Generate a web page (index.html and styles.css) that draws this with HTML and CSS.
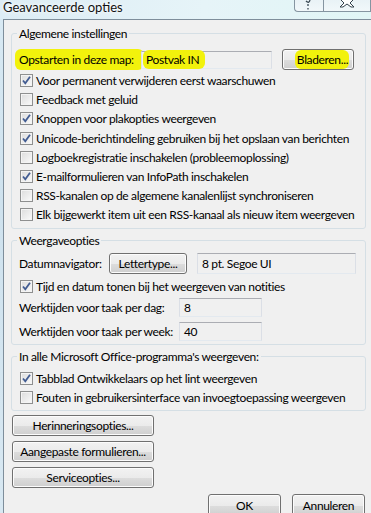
FILE: index.html
```html
<!DOCTYPE html>
<html lang="nl">
<head>
    <meta charset="UTF-8">
    <title>Geavanceerde opties</title>
    <link rel="stylesheet" href="styles.css">
</head>
<body>
    <div class="window">
        <div class="titlebar">
            <span class="title">Geavanceerde opties</span>
            <div class="caption-buttons">
                <span class="cap-btn help">
                    <svg width="10" height="10" viewBox="0 0 10 10"><path d="M2 1 Q5 4 6 0 M4 4 L4 6 M4 8 L4 9.5" fill="none" stroke="#3b4a55" stroke-width="1.3"/></svg>
                </span>
                <span class="cap-btn close">
                    <svg width="16" height="8" viewBox="0 0 16 8"><path d="M2 0 L5 3 L1 7 L4 7 L8 4 L12 7 L15 7 L11 3 L14 0" fill="#fff" stroke="#34424d" stroke-width="1"/></svg>
                </span>
            </div>
        </div>

        <div class="client">
            <fieldset class="group group-general">
                <legend>Algemene instellingen</legend>
                <div class="row map-row">
                    <span class="map-label"><span class="hl hl-label">Opstarten in deze map:</span></span>
                    <span class="field readonly map-field"><span class="hl hl-field">Postvak IN</span></span>
                    <span class="btn browse-btn"><span class="hl hl-btn">Bladeren...</span></span>
                </div>
                <div class="check-row checked"><span class="box"></span>Voor permanent verwijderen eerst waarschuwen</div>
                <div class="check-row"><span class="box"></span>Feedback met geluid</div>
                <div class="check-row checked"><span class="box"></span>Knoppen voor plakopties weergeven</div>
                <div class="check-row checked"><span class="box"></span>Unicode-berichtindeling gebruiken bij het opslaan van berichten</div>
                <div class="check-row"><span class="box"></span>Logboekregistratie inschakelen (probleemoplossing)</div>
                <div class="check-row checked"><span class="box"></span>E-mailformulieren van InfoPath inschakelen</div>
                <div class="check-row"><span class="box"></span>RSS-kanalen op de algemene kanalenlijst synchroniseren</div>
                <div class="check-row"><span class="box"></span>Elk bijgewerkt item uit een RSS-kanaal als nieuw item weergeven</div>
            </fieldset>

            <fieldset class="group group-display">
                <legend>Weergaveopties</legend>
                <div class="row date-row">
                    <span class="date-label">Datumnavigator:</span>
                    <span class="btn font-btn">Lettertype...</span>
                    <span class="field readonly font-field">8 pt. Segoe UI</span>
                </div>
                <div class="check-row checked notes-row"><span class="box"></span>Tijd en datum tonen bij het weergeven van notities</div>
                <div class="row hours-row">
                    <span class="hours-label">Werktijden voor taak per dag:</span>
                    <span class="field hours-field">8</span>
                </div>
                <div class="row hours-row week-row">
                    <span class="hours-label">Werktijden voor taak per week:</span>
                    <span class="field hours-field">40</span>
                </div>
            </fieldset>

            <fieldset class="group group-office">
                <legend>In alle Microsoft Office-programma's weergeven:</legend>
                <div class="check-row checked"><span class="box"></span>Tabblad Ontwikkelaars op het lint weergeven</div>
                <div class="check-row"><span class="box"></span>Fouten in gebruikersinterface van invoegtoepassing weergeven</div>
            </fieldset>

            <div class="side-buttons">
                <span class="btn side-btn">Herinneringsopties...</span>
                <span class="btn side-btn">Aangepaste formulieren...</span>
                <span class="btn side-btn">Serviceopties...</span>
            </div>

            <div class="dialog-buttons">
                <span class="btn dlg-btn">OK</span>
                <span class="btn dlg-btn">Annuleren</span>
            </div>
        </div>
    </div>
</body>
</html>
```

FILE: styles.css
```css
/* Windows 7 dialoog */
* { margin: 0; padding: 0; box-sizing: border-box; }
html, body { width: 371px; height: 513px; overflow: hidden; }
body {
    font-family: Lato, "Liberation Sans", sans-serif;
    font-size: 12px;
    letter-spacing: -0.35px;
    color: #000;
    background: #d6e7f1;
}
.window {
    width: 371px;
    height: 513px;
    background: linear-gradient(180deg, #d9eaf4 0%, #cfe2ee 40%, #d8e8f2 100%);
}

/* titelbalk */
.titlebar {
    height: 19px;
    display: flex;
    justify-content: space-between;
    background: linear-gradient(90deg, #dcecf5 0%, #e6f4f8 55%, #e1f6f6 100%);
}
.title {
    padding-left: 3px;
    line-height: 14px;
    font-size: 13px;
    letter-spacing: 0;
    color: #111;
    white-space: nowrap;
    text-shadow: 0 0 6px #fff, 0 0 3px #fff;
}
.caption-buttons { display: flex; height: 12px; }
.cap-btn {
    display: flex;
    justify-content: center;
    align-items: flex-start;
    height: 12px;
    border: 1px solid #8595a1;
    border-top: none;
    background: linear-gradient(180deg, #e9f2f6, #f1f8fa);
}
.cap-btn.help { width: 29px; border-radius: 0 0 0 4px; border-right: none; }
.cap-btn.close { width: 48px; }

/* clientgebied */
.client {
    margin-left: 3px;
    height: 494px;
    border-left: 1px solid #7e8e9b;
    border-top: 1px solid #7e8e9b;
    background: #f0f0f0;
    padding-left: 7px;
    padding-top: 6px;
}

.group {
    width: 355px;
    border: 1px solid #d5dfe5;
    border-radius: 3px;
    padding: 0 8px 3px 8px;
}
.group legend {
    margin-left: -3px;
    padding: 0 2px;
    line-height: 15px;
    white-space: nowrap;
}
.group-general { padding-top: 8px; padding-bottom: 3px; }
.group-display { margin-top: 4px; padding-top: 5px; padding-bottom: 3px; }
.group-office { margin-top: 4px; padding-top: 5px; padding-bottom: 3px; }

.row { display: flex; align-items: center; white-space: nowrap; }
.map-row { height: 21px; margin-bottom: 1px; }
.map-label { width: 122px; flex: none; margin-left: -1px; }
.map-field { width: 131px; height: 18px; flex: none; }
.browse-btn { width: 72px; height: 21px; flex: none; margin-left: 10px; }

.check-row {
    display: flex;
    align-items: center;
    height: 19.2px;
    white-space: nowrap;
}
.box {
    width: 13px;
    height: 13px;
    margin-right: 3px;
    flex: none;
    border: 1px solid #8e8f8f;
    background: linear-gradient(135deg, #dcdcdc 0%, #eeeeee 60%, #fbfbfb 100%);
    box-shadow: inset 0 0 0 1px #f4f4f4;
}
.checked .box {
    background-image:
        url("data:image/svg+xml,%3Csvg xmlns='http://www.w3.org/2000/svg' width='11' height='11' viewBox='0 0 11 11'%3E%3Cpath d='M2 5.5 L4.3 8.3 L9 1.8' fill='none' stroke='%23425c92' stroke-width='1.8'/%3E%3C/svg%3E"),
        linear-gradient(135deg, #dcdcdc 0%, #eeeeee 60%, #fbfbfb 100%);
}

.date-row { height: 21px; }
.date-label { width: 90px; flex: none; margin-left: -1px; }
.font-btn { width: 78px; height: 21px; flex: none; }
.font-field { width: 159px; height: 21px; flex: none; margin-left: 10px; }
.notes-row { margin-top: 3px; }
.hours-row { height: 19px; margin-top: 2px; }
.week-row { margin-top: 5px; }
.hours-label { width: 160px; flex: none; margin-left: -1px; }
.hours-field { width: 83px; height: 19px; flex: none; background: #fff; }

/* tekstvakken */
.field {
    display: flex;
    align-items: center;
    padding-left: 4px;
    border: 1px solid #dbdfe6;
    border-top-color: #abadb3;
    border-bottom-color: #e3e9ef;
    background: #f0f0f0;
}

/* knoppen */
.btn {
    display: flex;
    align-items: center;
    justify-content: center;
    border: 1px solid #707070;
    border-radius: 3px;
    background: linear-gradient(180deg, #f2f2f2 0%, #ebebeb 50%, #dddddd 51%, #cfcfcf 100%);
    box-shadow: inset 0 0 0 1px #fcfcfc;
    white-space: nowrap;
}
.side-buttons {
    display: flex;
    flex-direction: column;
    gap: 5px;
    margin-top: 4px;
    margin-left: 1px;
}
.side-btn { width: 142px; height: 21px; }
.dialog-buttons {
    display: flex;
    justify-content: flex-end;
    gap: 11px;
    width: 355px;
    padding-right: 1px;
    margin-top: 6px;
}
.dlg-btn { width: 73px; height: 23px; }

/* markeerstift */
.hl {
    background: #f2f20c;
    border-radius: 6px;
}
.hl-label { margin-left: -4px; padding: 3px 10px 3px 4px; }
.hl-field { margin-left: -3px; padding: 2px 6px 2px 3px; }
.hl-btn { margin-left: 8px; padding: 2px 1px 2px 2px; }
```
